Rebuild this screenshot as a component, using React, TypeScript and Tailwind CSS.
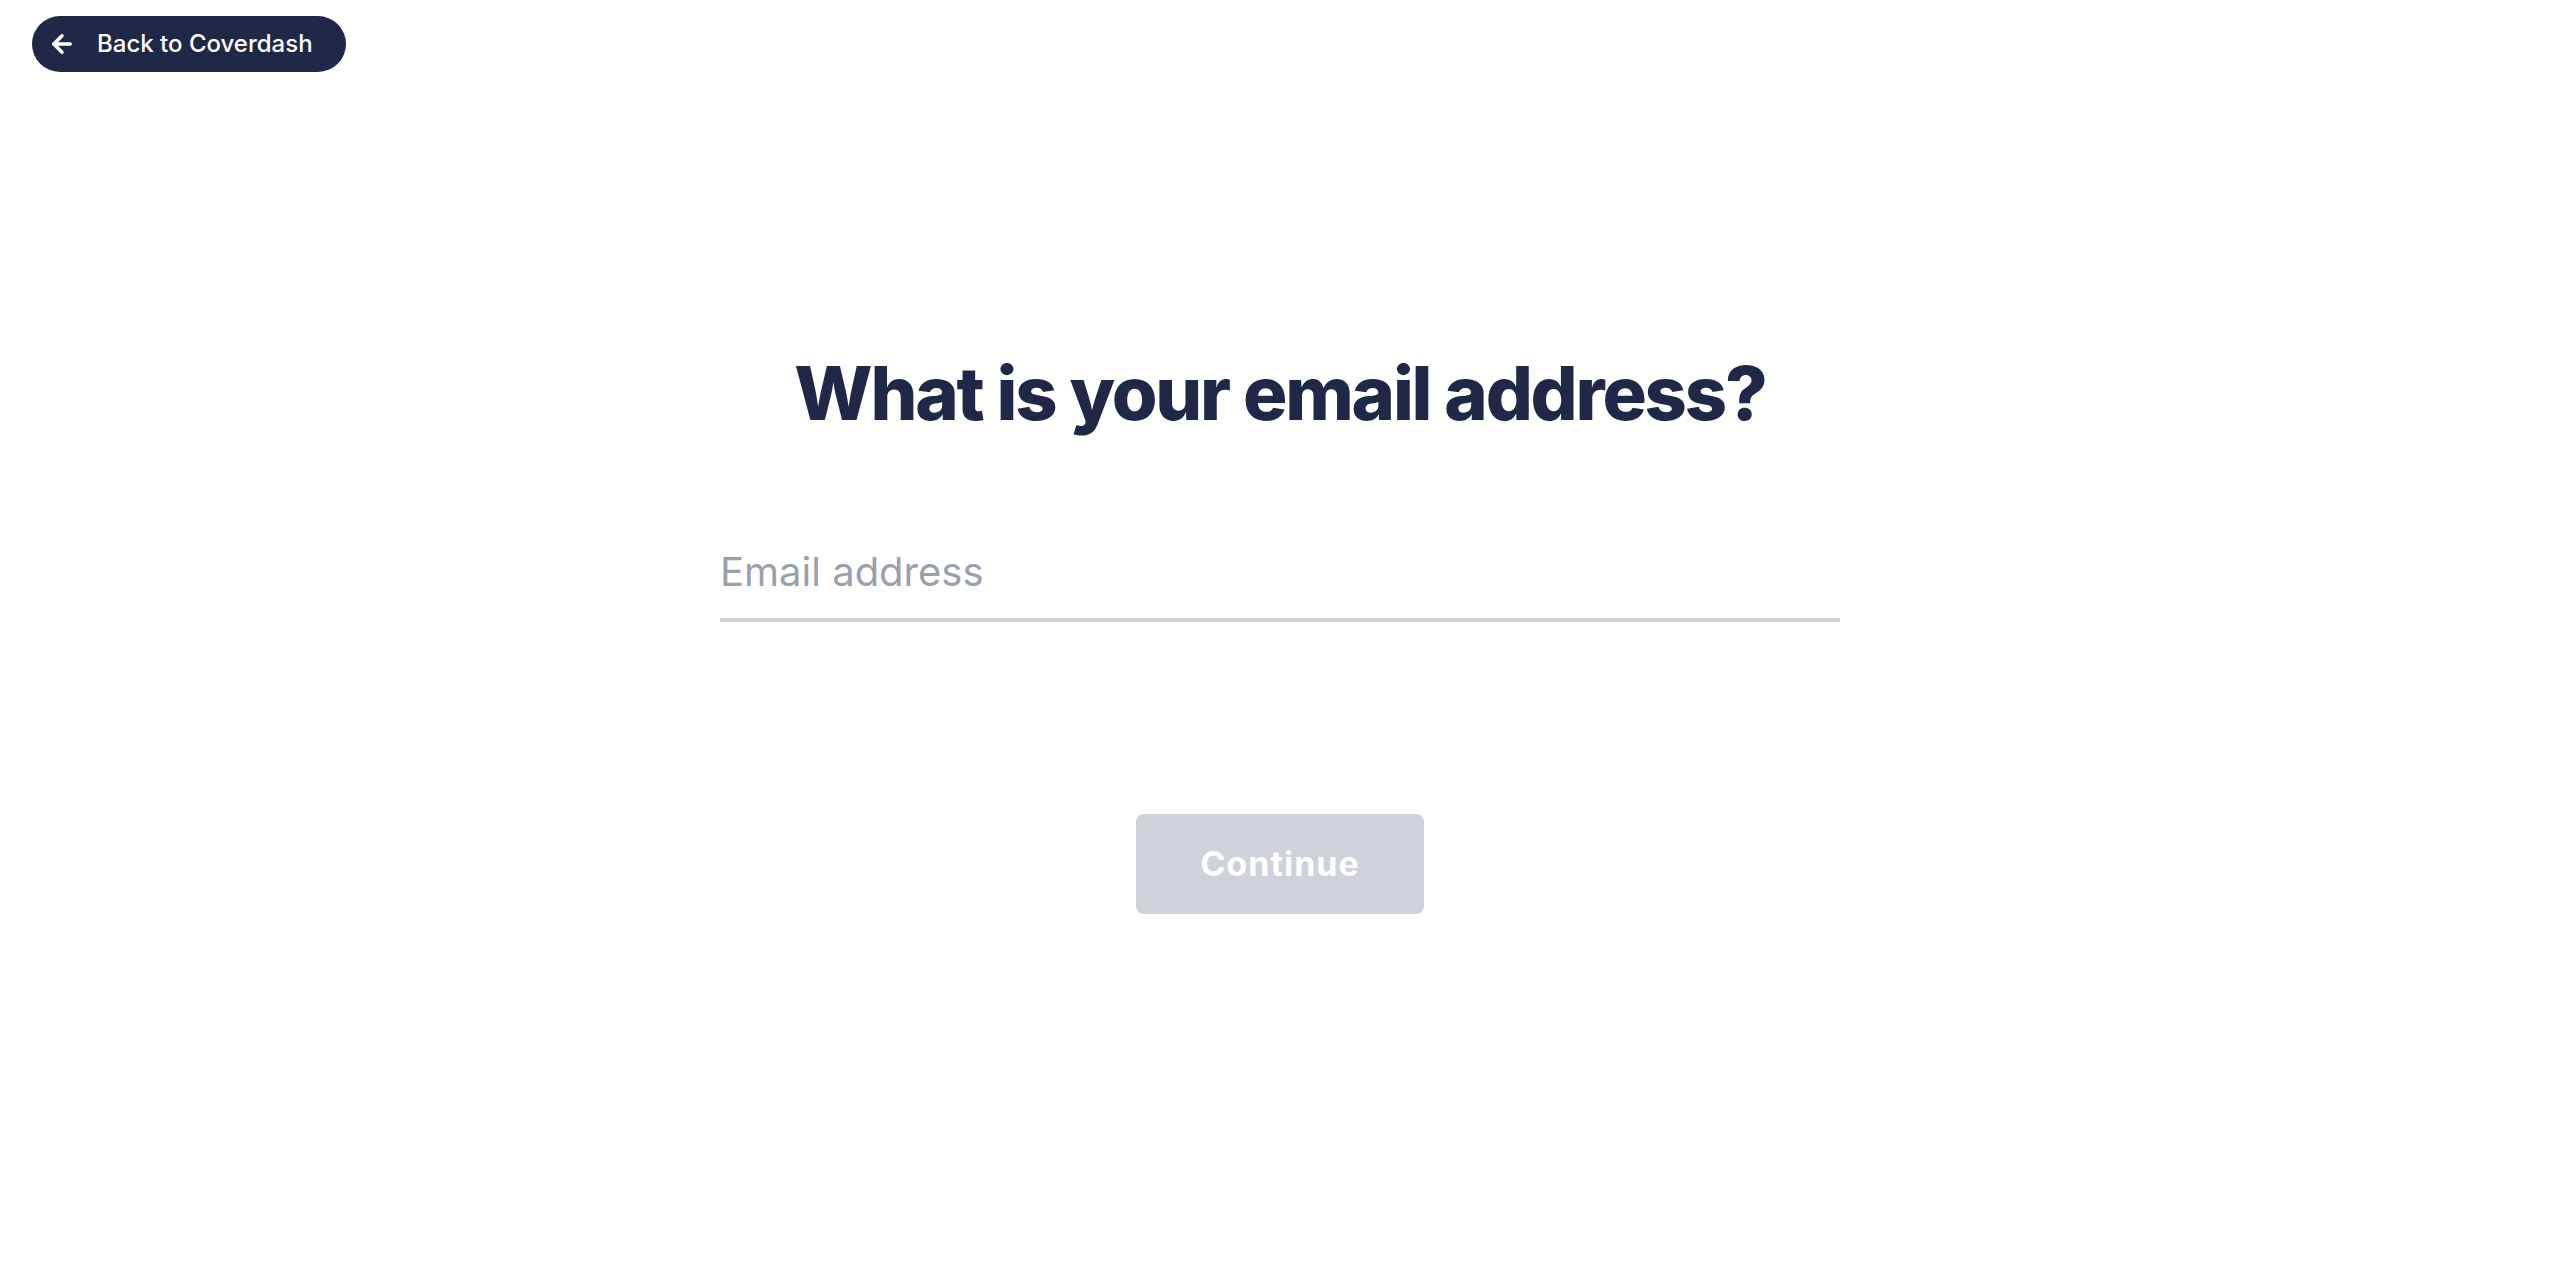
import React from "react";
import { ArrowLeft } from "lucide-react";

export default function App() {
  return (
    <div className="min-h-screen w-full bg-white font-['Inter','Noto_Sans',sans-serif] text-[#1f2847]">
      <div className="px-[32px] pt-[16px]">
        <button className="flex h-[56px] w-[314px] items-center rounded-full bg-[#1f2847] pl-[16px] text-white">
          <ArrowLeft className="h-[28px] w-[28px]" strokeWidth={3} />
          <span className="ml-[21px] text-[24px] font-medium leading-none tracking-[0em]">Back to Coverdash</span>
        </button>
      </div>
      <div className="flex flex-col items-center pt-[277px]">
        <h1 className="text-[74px] font-extrabold leading-[1.2] tracking-[-0.03em] text-[#1f2847]">
          What is your email address?
        </h1>
        <input
          type="email"
          placeholder="Email address"
          className="mt-[110px] w-[1120px] border-b-[4px] border-[#d1d3db] bg-transparent pb-[22px] text-[40px] leading-[1.2] text-[#1f2847] outline-none placeholder:text-[#9a9fae]"
        />
        <button className="mt-[192px] flex h-[100px] w-[288px] items-center justify-center rounded-[8px] bg-[#cfd2da] text-[34px] font-bold tracking-[0.03em] text-white">
          Continue
        </button>
      </div>
    </div>
  );
}
